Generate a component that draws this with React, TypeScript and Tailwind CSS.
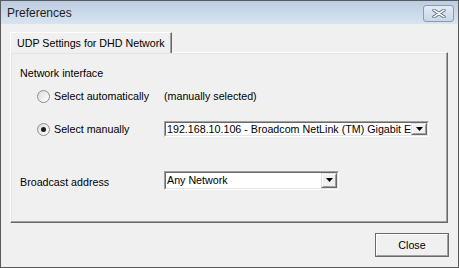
const TXT = "font-['Liberation_Sans',Arial,sans-serif] text-[10.7px] text-black leading-none";

function Radio({ checked }: { checked?: boolean }) {
  return (
    <span className="w-[13px] h-[13px] rounded-full border border-[#8c8e90] bg-gradient-to-br from-[#dcdcdc] to-white flex items-center justify-center shrink-0">
      {checked && <span className="w-[5px] h-[5px] rounded-full bg-[#1c1c1c]" />}
    </span>
  );
}

function Arrow() {
  return (
    <div className="w-[16px] self-stretch border border-t-[#e3e3e3] border-l-[#e3e3e3] border-r-[#696969] border-b-[#696969] bg-[#f0f0f0] flex">
      <div className="flex-1 border border-t-white border-l-white border-r-[#a0a0a0] border-b-[#a0a0a0] flex items-center justify-center">
        <svg width="7" height="4" viewBox="0 0 7 4">
          <path d="M0 0h7L3.5 4z" fill="#000" />
        </svg>
      </div>
    </div>
  );
}

function Combo({ value, size }: { value: string; size: string }) {
  return (
    <div className={`${size} border border-t-[#a0a0a0] border-l-[#a0a0a0] border-r-white border-b-white flex`}>
      <div className="flex-1 min-w-0 border border-t-[#696969] border-l-[#696969] border-r-[#e3e3e3] border-b-[#e3e3e3] bg-white flex items-stretch">
        <div className={`${TXT} flex-1 min-w-0 overflow-hidden whitespace-nowrap pl-[1px] flex items-center`}>{value}</div>
        <Arrow />
      </div>
    </div>
  );
}

export default function App() {
  return (
    <div className="w-[459px] h-[268px] bg-[#f0f0f0] border border-[#5a5a5a] flex flex-col overflow-hidden">
      <div className="h-[23px] shrink-0 bg-gradient-to-b from-[#bccde1] to-[#d8e4f1] flex items-start justify-between pl-[6px] pr-[4px]">
        <span className="font-['Liberation_Sans',Arial,sans-serif] text-[12px] text-[#1e1e1e] mt-[6px] leading-none">Preferences</span>
        <div className="mt-[4px] w-[31px] h-[17px] rounded-[3px] border border-[#8a9ab0] bg-gradient-to-b from-[#e3ebf5] to-[#c9d7e7] flex items-center justify-center">
          <svg width="14" height="9" viewBox="0 0 14 9">
            <path d="M2 1.2L12 7.8M12 1.2L2 7.8" stroke="#56657a" strokeWidth="3.2" strokeLinecap="round" />
            <path d="M2 1.2L12 7.8M12 1.2L2 7.8" stroke="#ffffff" strokeWidth="1.6" strokeLinecap="round" />
          </svg>
        </div>
      </div>

      <div className="flex-1 flex flex-col pl-[9px] pr-[10px] pt-[8px]">
        <div className="flex">
          <div className={`${TXT} w-[162px] h-[21px] -mb-[1px] relative z-10 bg-[#f0f0f0] border border-t-white border-l-white border-r-[#696969] border-b-0 shadow-[inset_-1px_0_0_#a0a0a0] pl-[6px] pt-[5px]`}>
            UDP Settings for DHD Network
          </div>
        </div>
        <div className="h-[171px] border border-t-white border-l-white border-r-[#696969] border-b-[#696969] shadow-[inset_-1px_-1px_0_#a0a0a0,inset_1px_1px_0_#e3e3e3] flex flex-col pt-[10px]">
          <div className="h-[20px] flex items-center pl-[9px]">
            <span className={TXT}>Network interface</span>
          </div>
          <div className="h-[20px] mt-[3px] flex items-center">
            <div className="w-[153px] pl-[26px] flex items-center gap-[4px]">
              <Radio />
              <span className={TXT}>Select automatically</span>
            </div>
            <span className={TXT}>(manually selected)</span>
          </div>
          <div className="h-[20px] mt-[13px] flex items-center">
            <div className="w-[153px] pl-[26px] flex items-center gap-[4px]">
              <Radio checked />
              <span className={TXT}>Select manually</span>
            </div>
            <Combo size="w-[265px] h-[16px]" value="192.168.10.106 - Broadcom NetLink (TM) Gigabit E" />
          </div>
          <div className="h-[20px] mt-[31px] flex items-center">
            <div className="w-[153px] pl-[9px]">
              <span className={TXT}>Broadcast address</span>
            </div>
            <Combo size="w-[175px] h-[19px]" value="Any Network" />
          </div>
        </div>
        <div className="flex justify-end mt-[10px]">
          <div className="w-[74px] h-[24px] mr-[-1px] border border-[#6a6a6a] flex">
            <div className="flex-1 border border-t-white border-l-white border-r-[#a0a0a0] border-b-[#a0a0a0] bg-[#f0f0f0] flex items-center justify-center">
              <span className={TXT}>Close</span>
            </div>
          </div>
        </div>
      </div>
    </div>
  );
}
